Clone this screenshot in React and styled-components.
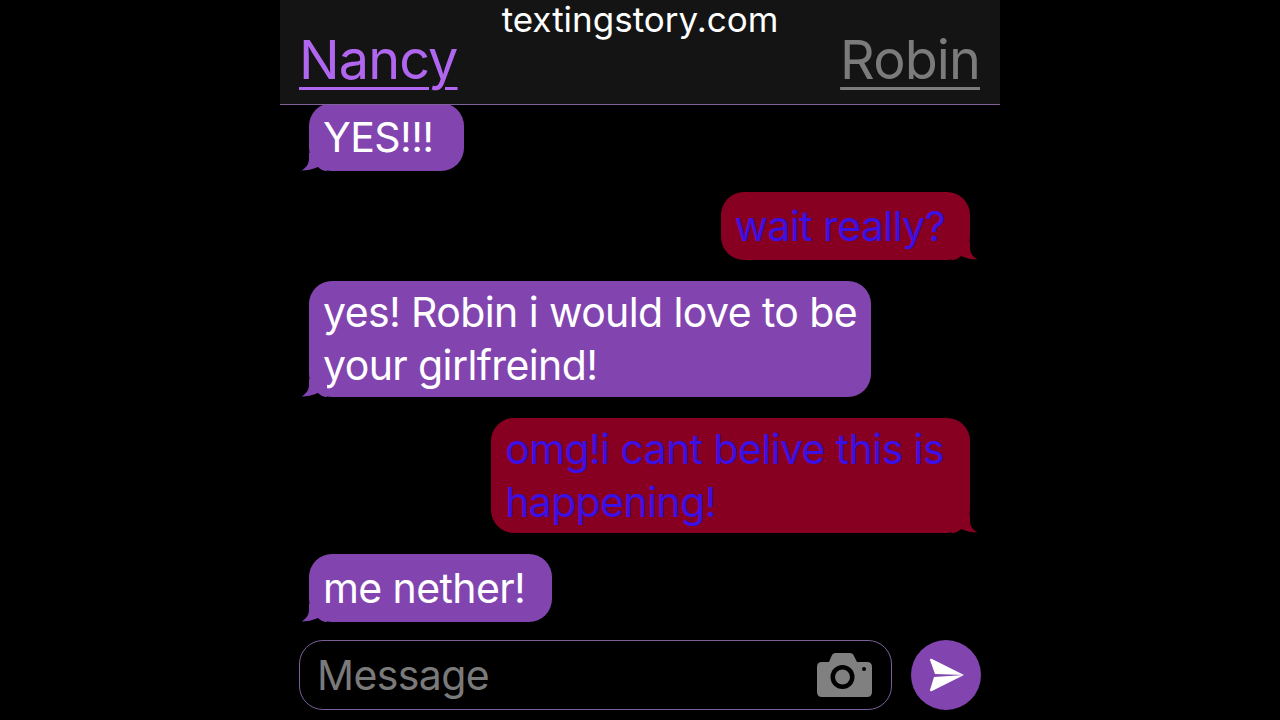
import React from 'react';
import styled, { createGlobalStyle } from 'styled-components';

const FONT = 'Inter, "Liberation Sans", sans-serif';
const PURPLE = '#8245b0';
const RED = '#870022';

const GlobalStyle = createGlobalStyle`
  html, body {
    margin: 0;
    height: 100%;
    background: #000;
    overflow: hidden;
  }
`;

const Page = styled.div`
  width: 720px;
  height: 720px;
  margin: 0 auto;
  display: flex;
  flex-direction: column;
  font-family: ${FONT};
`;

const Header = styled.header`
  position: relative;
  z-index: 1;
  height: 104px;
  flex: none;
  padding: 0 20px 0 19px;
  display: flex;
  justify-content: space-between;
  align-items: flex-start;
  background: #141414;
  border-bottom: 1px solid #80609c;
`;

const Watermark = styled.div`
  position: absolute;
  top: 0;
  left: 0;
  right: 0;
  text-align: center;
  color: #fff;
  font-size: 35px;
  line-height: 39px;
`;

const Name = styled.span`
  margin-top: 30px;
  font-size: 54px;
  line-height: 60px;
  letter-spacing: -0.9px;
  color: ${(p) => (p.$active ? '#b066ee' : '#7b7b7b')};
  text-decoration: underline;
  text-decoration-thickness: 3px;
  text-underline-offset: 8px;
`;

const Thread = styled.main`
  flex: 1;
  margin-top: -2px;
  padding: 0 30px 0 29px;
  display: flex;
  flex-direction: column;
  align-items: flex-start;
  gap: 21px;
`;

const Bubble = styled.div`
  position: relative;
  box-sizing: border-box;
  min-height: ${(p) => (p.$lines > 1 ? 115.5 : 68)}px;
  padding: 5px ${(p) => p.$pad}px ${(p) => (p.$lines > 1 ? 4 : 5)}px 14px;
  display: flex;
  align-items: center;
  align-self: ${(p) => (p.$mine ? 'flex-end' : 'flex-start')};
  border-radius: 23px;
  background: ${(p) => (p.$mine ? RED : PURPLE)};
  color: ${(p) => (p.$mine ? '#3a10e4' : '#fff')};
  font-size: 41px;
  line-height: 53px;
  letter-spacing: -0.6px;
`;

const Tail = styled.svg`
  position: absolute;
  bottom: 0;
  width: 26px;
  height: 18px;
  ${(p) => (p.$mine ? 'right: -8px; transform: scaleX(-1);' : 'left: -8px;')}
`;

const Composer = styled.footer`
  flex: none;
  height: 80px;
  padding: 0 19px;
  display: flex;
  align-items: flex-start;
  gap: 19px;
`;

const InputBox = styled.div`
  box-sizing: border-box;
  width: 593px;
  height: 70px;
  padding: 0 19px 0 17px;
  display: flex;
  align-items: center;
  justify-content: space-between;
  border: 1px solid #7b5f98;
  border-radius: 24px;
`;

const Placeholder = styled.span`
  color: #7a7a7a;
  font-size: 41px;
  letter-spacing: -0.6px;
`;

const SendButton = styled.div`
  width: 70px;
  height: 70px;
  border-radius: 50%;
  background: ${PURPLE};
  display: flex;
  align-items: center;
  justify-content: center;
`;

const messages = [
  { id: 1, pad: 30, lines: ['YES!!!'] },
  { id: 2, pad: 25, mine: true, lines: ['wait really?'] },
  { id: 3, pad: 14, lines: ['yes! Robin i would love to be', 'your girlfreind!'] },
  { id: 4, pad: 26, mine: true, lines: ['omg!i cant belive this is', 'happening!'] },
  { id: 5, pad: 27, lines: ['me nether!'] },
];

const BubbleTail = ({ mine }) => (
  <Tail $mine={mine} viewBox="0 0 26 18">
    <path
      d="M8 0 V6 C8 11 5 15 0.5 17.5 C5 17.5 12 16.5 17 14 C19 16 22 18 26 18 V0 Z"
      fill={mine ? RED : PURPLE}
    />
  </Tail>
);

const CameraIcon = () => (
  <svg width="55" height="44" viewBox="0 0 55 44">
    <path
      fill="#808080"
      d="M5 9 H12 L15 2 Q16 0 18.5 0 H33 Q35.5 0 36.5 2 L40 9 H50 Q55 9 55 14 V39 Q55 44 50 44 H5 Q0 44 0 39 V14 Q0 9 5 9 Z"
    />
    <circle cx="25.5" cy="24" r="12" fill="#000" />
    <circle cx="25.5" cy="24" r="7.5" fill="#808080" />
    <circle cx="47" cy="16" r="2" fill="#000" />
  </svg>
);

// two fins meeting at the nose, with a thin slit between them
const SendIcon = () => (
  <svg width="38" height="36" viewBox="0 0 38 36">
    <path fill="#fff" d="M3 3 Q3 1 5 2 L37 18 L8 17 Z" />
    <path fill="#fff" d="M3 33 Q3 35 5 34 L37 18 L7 20 Z" />
  </svg>
);

const App = () => (
  <Page>
    <GlobalStyle />
    <Header>
      <Watermark>textingstory.com</Watermark>
      <Name $active>Nancy</Name>
      <Name>Robin</Name>
    </Header>
    <Thread>
      {messages.map(({ id, mine, pad, lines }) => (
        <Bubble key={id} $mine={mine} $pad={pad} $lines={lines.length}>
          <BubbleTail mine={mine} />
          <span>
            {lines.map((line) => (
              <div key={line}>{line}</div>
            ))}
          </span>
        </Bubble>
      ))}
    </Thread>
    <Composer>
      <InputBox>
        <Placeholder>Message</Placeholder>
        <CameraIcon />
      </InputBox>
      <SendButton>
        <SendIcon />
      </SendButton>
    </Composer>
  </Page>
);

export default App;
